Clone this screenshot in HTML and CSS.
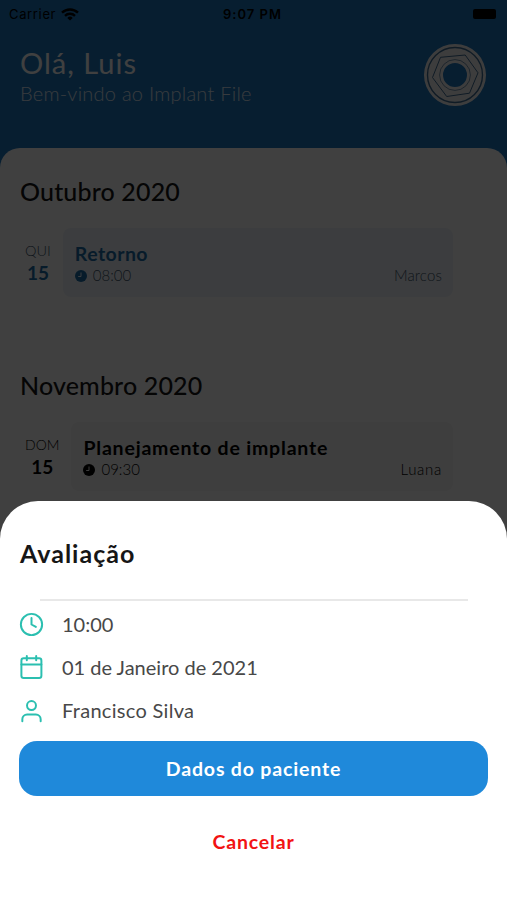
FILE: index.html
```
<!DOCTYPE html>
<html lang="pt">
<head>
<meta charset="utf-8">
<title>Implant File</title>
<link rel="stylesheet" href="styles.css">
</head>
<body>
<div class="screen">
  <header class="header">
    <div class="status">
      <div class="carrier">Carrier
        <svg width="18" height="13" viewBox="0 0 18 13"><g fill="none" stroke="#000" stroke-width="2.4"><path d="M1 4.7a11.5 11.5 0 0 1 16 0"/><path d="M4 7.8a7.2 7.2 0 0 1 10 0"/></g><path d="M9 12.6 6.3 9.9a3.9 3.9 0 0 1 5.4 0z"/></svg>
      </div>
      <div class="time">9:07 PM</div>
      <div class="battery-wrap"><span class="battery"></span></div>
    </div>
    <div class="welcome">
      <div>
        <h1 class="hello">Olá, Luis</h1>
        <p class="subtitle">Bem-vindo ao Implant File</p>
      </div>
      <svg class="logo" width="64" height="64" viewBox="0 0 64 64">
        <path fill="#f4f4f4" fill-rule="evenodd" d="M32 1a31 31 0 1 0 0 62 31 31 0 0 0 0-62zM32 20a12 12 0 1 1 0 24 12 12 0 0 1 0-24z"/>
        <g fill="none" stroke="#3f6c94"><circle cx="32" cy="32" r="27.5" stroke-width="1.4"/><path stroke-width="1" d="M17.5 14.3 42.2 12 55 29.8 46.5 50.2 23.7 53.5 9.5 34.5z"/><circle cx="32" cy="32" r="15.4" stroke-width=".7"/></g>
      </svg>
    </div>
  </header>
  <main class="agenda">
    <section class="month">
      <h2 class="month-title">Outubro 2020</h2>
      <div class="row blue">
        <div class="day"><span class="weekday">QUI</span><b class="date">15</b></div>
        <div class="event">
          <h3 class="event-title short">Retorno</h3>
          <div class="meta"><svg width="12" height="12" viewBox="0 0 12 12"><circle cx="6" cy="6" r="6" fill="currentColor"/><path d="M6 2.5v4H3.2" fill="none" stroke="#e9f2fb"/></svg><span>08:00</span><span class="person">Marcos</span></div>
        </div>
      </div>
    </section>
    <section class="month">
      <h2 class="month-title">Novembro 2020</h2>
      <div class="row gray">
        <div class="day"><span class="weekday">DOM</span><b class="date">15</b></div>
        <div class="event">
          <h3 class="event-title">Planejamento de implante</h3>
          <div class="meta"><svg width="12" height="12" viewBox="0 0 12 12"><circle cx="6" cy="6" r="6" fill="currentColor"/><path d="M6 2.5v4H3.2" fill="none" stroke="#f4f4f4"/></svg><span>09:30</span><span class="person luana">Luana</span></div>
        </div>
      </div>
    </section>
  </main>
  <div class="backdrop">
    <section class="sheet">
      <h2 class="sheet-title">Avaliação</h2>
      <hr class="rule">
      <div class="details">
        <div class="detail"><svg viewBox="0 0 24 24"><circle cx="12" cy="12" r="10.2"/><path d="M12 5.7V12l4.2 2.3"/></svg><span>10:00</span></div>
        <div class="detail date-line"><svg viewBox="0 0 24 24"><rect x="2.3" y="3.2" width="19.2" height="18.8" rx="2.2"/><path d="M2.3 9.2h19.2M7.5 1v4M16.5 1v4"/></svg><span>01 de Janeiro de 2021</span></div>
        <div class="detail name"><svg viewBox="0 0 24 24"><circle cx="12" cy="6.3" r="4.3"/><path d="M3.2 21.3v-1.8a4.6 4.6 0 0 1 4.6-4.6h8.4a4.6 4.6 0 0 1 4.6 4.6v1.8"/></svg><span>Francisco Silva</span></div>
      </div>
      <button class="primary">Dados do paciente</button>
      <button class="cancel">Cancelar</button>
    </section>
  </div>
</div>
</body>
</html>
```

FILE: styles.css
```
* { box-sizing: border-box; margin: 0; padding: 0; }
body { font-family: Lato, "Liberation Sans", sans-serif; background: #fff; }
svg { display: block; flex: none; }
.screen { position: relative; width: 507px; height: 900px; overflow: hidden; background: #1c78c0; }
.header { height: 148px; color: #fff; }
.status { display: grid; grid-template-columns: 1fr auto 1fr; align-items: center; height: 28px; padding: 0 11px 0 9px; color: #000; font: 400 13px Inter, sans-serif; }
.carrier { display: flex; align-items: center; gap: 5px; letter-spacing: .65px; }
.time { font-weight: 600; letter-spacing: 1px; }
.battery-wrap { display: flex; justify-content: flex-end; }
.battery { width: 23px; height: 10px; border-radius: 2px; background: #000; }
.welcome { display: flex; justify-content: space-between; padding: 14px 20px 0; }
.hello { margin-top: 3px; font-size: 29px; line-height: 36px; font-weight: 400; letter-spacing: 1px; }
.subtitle { font-size: 20px; line-height: 24px; font-weight: 300; letter-spacing: .24px; opacity: .85; }
.logo { margin-top: 1px; }
.agenda { height: 752px; padding: 25px 54px 0 20px; border-radius: 20px 20px 0 0; background: #fff; color: #000; }
.month { height: 194px; }
.month-title { font-size: 25px; line-height: 36px; font-weight: 500; letter-spacing: .15px; color: #161616; }
.row { display: flex; margin-top: 19px; gap: 12px; }
.day { display: flex; flex-direction: column; align-items: center; padding: 13px 0 0 5px; }
.weekday { font-size: 14.5px; line-height: 20px; font-weight: 300; }
.gray .weekday { font-size: 14px; }
.date { font-size: 19px; line-height: 23px; }
.event { flex: 1; height: 69px; padding: 13px 11px 0 12px; border-radius: 8px; }
.event-title { font-size: 19.5px; line-height: 26px; font-weight: 700; letter-spacing: .8px; }
.event-title.short { letter-spacing: .45px; }
.meta { display: flex; align-items: center; height: 17px; gap: 6px; font-size: 15px; line-height: 17px; font-weight: 300; }
.person { margin-left: auto; letter-spacing: .15px; }
.luana { letter-spacing: .7px; }
.blue { color: #1c6ea8; }
.blue .event { background: #eef3fa; }
.blue .weekday, .blue .meta span { color: #40566a; }
.gray .event { background: #f5f5f5; }
.backdrop { position: absolute; inset: 0; display: flex; flex-direction: column; justify-content: flex-end; background: rgba(0, 0, 0, .75); }
.sheet { height: 399px; padding: 34px 19px 0; border-radius: 38px 38px 0 0; background: #fff; }
.sheet-title { padding-left: 1px; font-size: 25px; line-height: 36px; font-weight: 700; letter-spacing: 1px; color: #161616; }
.rule { height: 2px; margin: 28px 20px 0 21px; border: 0; background: #e8e8e8; }
.details { padding-top: 2px; }
.detail { display: flex; align-items: center; gap: 18px; height: 43.3px; font-size: 20px; color: #484848; }
.detail span { padding-bottom: 2px; }
.detail svg { width: 25px; height: 25px; fill: none; stroke: #2bbfb0; stroke-width: 1.9; stroke-linecap: round; stroke-linejoin: round; }
.name { letter-spacing: .3px; }
button { display: block; width: 100%; border: 0; background: none; font: 700 19.5px/24px Lato, sans-serif; letter-spacing: .83px; }
.primary { height: 55px; margin-top: 8px; padding-top: 2px; border-radius: 18px; background: #1f89da; color: #fff; }
.cancel { margin-top: 34px; color: #f21313; }
```
